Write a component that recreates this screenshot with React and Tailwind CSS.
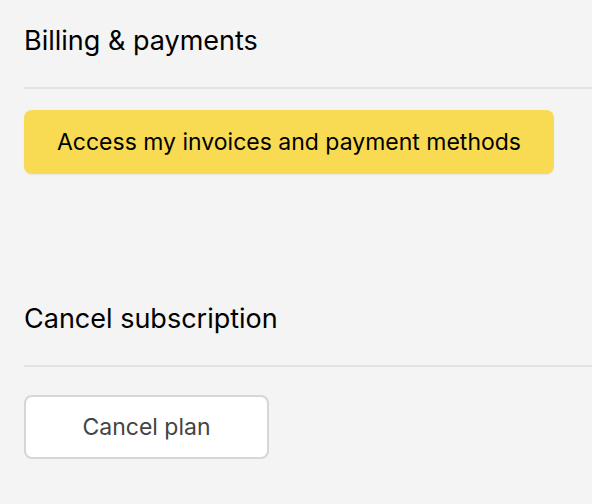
import React from "react";

function Section({ title, gap, children }) {
  return (
    <section className="ml-6">
      <h2 className="text-[27px] leading-[32px] text-black pt-[25px] pb-[30px] border-b-2 border-[#e3e3e3]">
        {title}
      </h2>
      <div className={gap}>{children}</div>
    </section>
  );
}

export default function App() {
  return (
    <div
      className="min-h-[504px] w-full bg-[#f4f4f4] overflow-hidden"
      style={{ fontFamily: "Inter, 'Noto Sans', sans-serif" }}
    >
      <Section title="Billing & payments" gap="pt-[21px]">
        <button className="h-16 w-[530px] rounded-lg bg-[#f8db52] text-[23px] text-black shadow-[0_1px_2px_rgba(0,0,0,0.06)]">
          Access my invoices and payment methods
        </button>
      </Section>
      <div className="h-[104px]" />
      <Section title="Cancel subscription" gap="pt-[28px]">
        <button className="h-[64px] w-[245px] rounded-lg bg-white border-2 border-[#d6d6d6] text-[23px] text-[#444]">
          Cancel plan
        </button>
      </Section>
    </div>
  );
}
